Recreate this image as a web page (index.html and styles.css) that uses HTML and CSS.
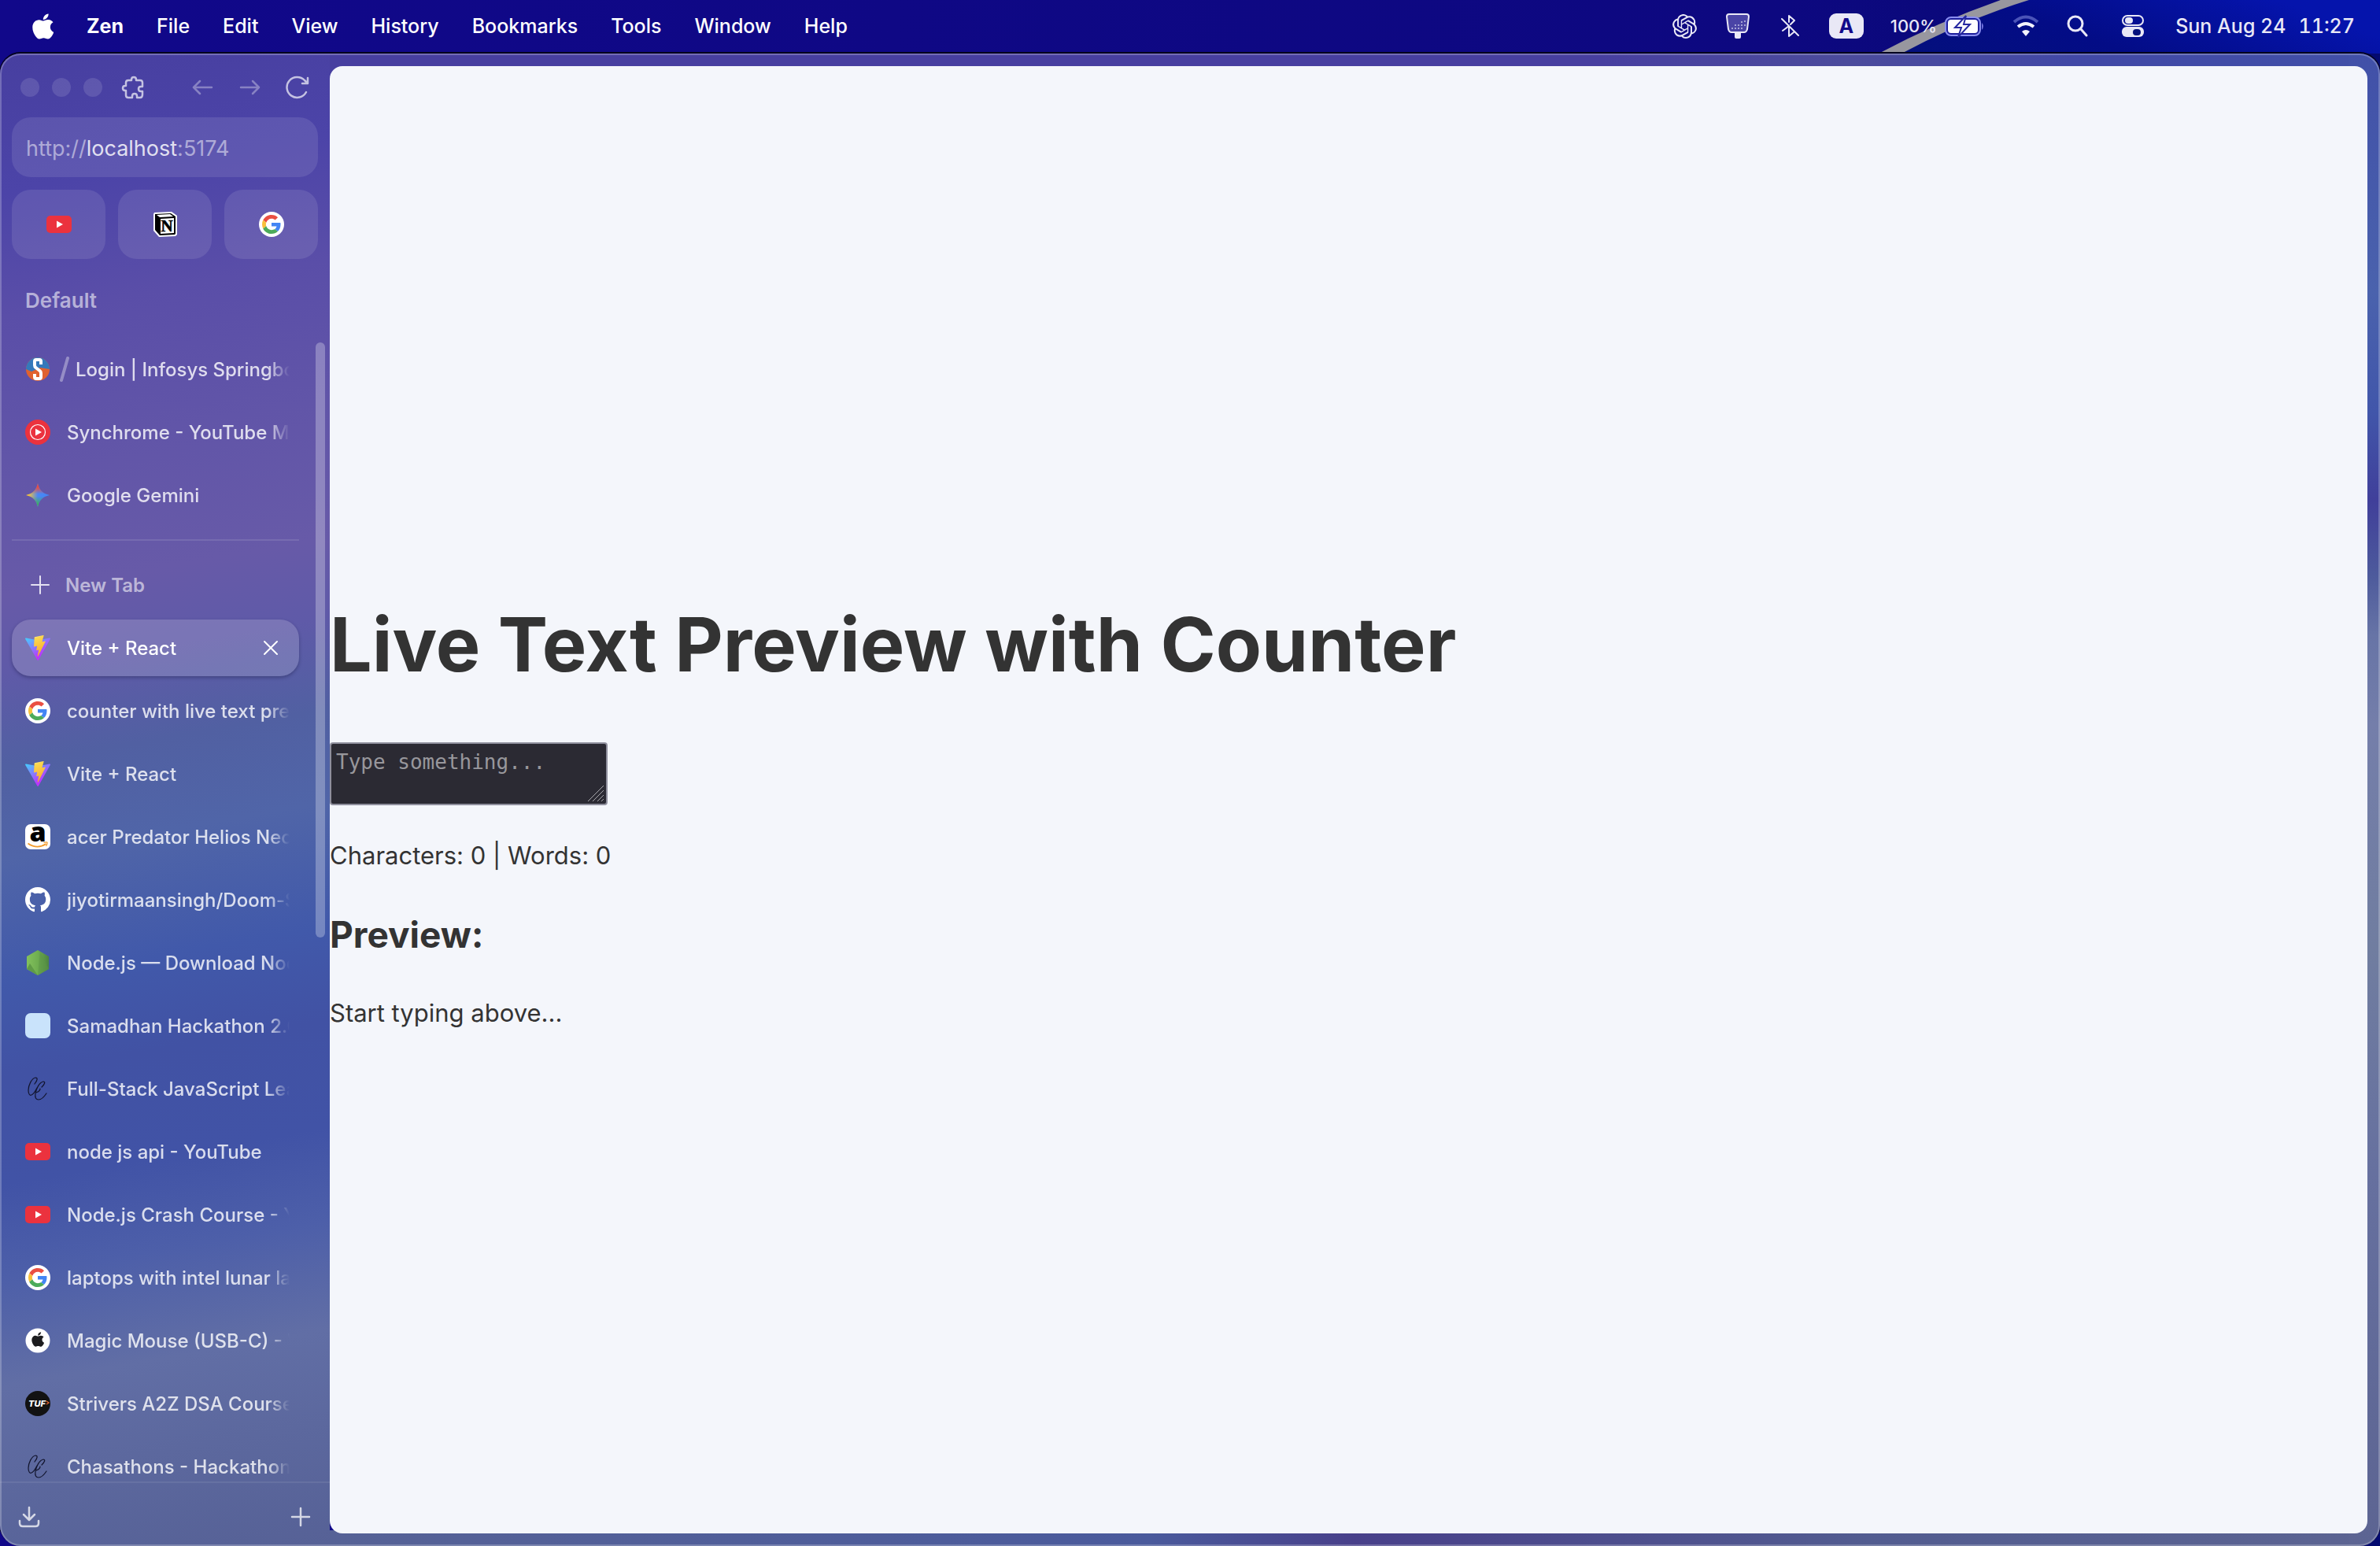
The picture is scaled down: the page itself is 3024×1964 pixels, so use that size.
FILE: index.html
```html
<!DOCTYPE html>
<html lang="en">
<head>
<meta charset="utf-8">
<title>Vite + React</title>
<link rel="stylesheet" href="styles.css">
</head>
<body>
<svg class="sprite" aria-hidden="true">
  <defs>
    <linearGradient id="vite-a" x1="0" y1="0" x2="0.6" y2="0.8"><stop offset="0" stop-color="#41d1ff"/><stop offset="1" stop-color="#bd34fe"/></linearGradient>
    <linearGradient id="vite-b" x1="0.4" y1="0" x2="0.6" y2="1"><stop offset="0" stop-color="#ffea83"/><stop offset="0.1" stop-color="#fbd84f"/><stop offset="1" stop-color="#f7a42a"/></linearGradient>
    <linearGradient id="gem-a" x1="0" y1="0" x2="1" y2="0"><stop offset="0.1" stop-color="#f5c33b"/><stop offset="0.5" stop-color="#4b86f5"/><stop offset="1" stop-color="#4285f4"/></linearGradient>
    <linearGradient id="gem-r" x1="0" y1="0" x2="0" y2="1"><stop offset="0" stop-color="#ec4a3c"/><stop offset="0.15" stop-color="#ec4a3c"/><stop offset="0.45" stop-color="#ec4a3c" stop-opacity="0"/></linearGradient>
    <linearGradient id="gem-g" x1="0" y1="1" x2="0" y2="0"><stop offset="0.1" stop-color="#3fae58"/><stop offset="0.45" stop-color="#3fae58" stop-opacity="0"/></linearGradient>
    <linearGradient id="node-a" x1="0" y1="0" x2="1" y2="0"><stop offset="0" stop-color="#83c15c"/><stop offset="0.5" stop-color="#6fae50"/><stop offset="1" stop-color="#4c8341"/></linearGradient>
  </defs>
  <symbol id="apple" viewBox="0 28 376 456"><path d="M318.7 268.7c-.2-36.7 16.4-64.4 50-84.8-18.8-26.9-47.2-41.7-84.7-44.6-35.5-2.8-74.3 20.7-88.5 20.7-15 0-49.4-19.7-76.4-19.7C63.3 141.2 4 184.8 4 273.5q0 39.3 14.4 81.2c12.8 36.7 59 126.7 107.2 125.2 25.2-.6 43-17.9 75.8-17.9 31.8 0 48.3 17.9 76.4 17.9 48.6-.7 90.4-82.5 102.6-119.3-65.2-30.7-61.7-90-61.7-91.9zm-56.6-164.2c27.3-32.4 24.8-61.9 24-72.5-24.1 1.4-52 16.4-67.9 34.9-17.5 19.8-27.8 44.3-25.6 71.9 26.1 2 49.9-11.4 69.5-34.3z"/></symbol>
  <symbol id="youtube" viewBox="0 0 32 32"><rect y="5" width="32" height="22" rx="5" fill="#eb323e"/><path d="M13 11.5v9l8-4.500z" fill="#fff"/></symbol>
  <symbol id="google" viewBox="0 0 32 32"><circle cx="16" cy="16" r="16" fill="#fff"/><g transform="translate(4 4) scale(.5)"><path fill="#ea4f42" d="M24 9.500c3.540 0 6.710 1.220 9.210 3.600l6.850-6.850C35.900 2.380 30.470 0 24 0 14.620 0 6.510 5.380 2.560 13.220l7.980 6.190C12.430 13.720 17.740 9.500 24 9.500z"/><path fill="#4285f4" d="M46.980 24.550c0-1.570-.15-3.090-.38-4.550H24v9.020h12.940c-.58 2.960-2.260 5.480-4.780 7.180l7.730 6c4.510-4.180 7.090-10.360 7.090-17.650z"/><path fill="#f9c03a" d="M10.530 28.590c-.48-1.450-.76-2.990-.76-4.590s.27-3.140.76-4.590l-7.980-6.190C.92 16.460 0 20.120 0 24c0 3.880.92 7.540 2.560 10.780l7.970-6.190z"/><path fill="#4cab5a" d="M24 48c6.480 0 11.930-2.130 15.890-5.810l-7.730-6c-2.150 1.450-4.920 2.300-8.160 2.300-6.260 0-11.570-4.220-13.470-9.910l-7.980 6.190C6.510 42.620 14.620 48 24 48z"/></g></symbol>
  <symbol id="springboard" viewBox="0 0 32 32"><circle cx="16" cy="16" r="15" fill="#e0622f"/><path d="M1 16a15 15 0 0 1 30 0l-12-2-11 5z" fill="#3479bb"/><path d="M20 10V6q0-2-2-2h-4q-2 0-2 2v5q0 2 1.500 3l5 4q1.500 1 1.500 3v5q0 2-2 2h-4q-2 0-2-2v-4" fill="none" stroke="#fff" stroke-width="4"/></symbol>
  <symbol id="ytmusic" viewBox="0 0 32 32"><circle cx="16" cy="16" r="16" fill="#eb323e"/><circle cx="16" cy="16" r="9.500" fill="none" stroke="#fff" stroke-width="1.200"/><path d="M13 11.500v9l8-4.500z" fill="#fff"/></symbol>
  <symbol id="gemini" viewBox="0 0 32 32"><path d="M16 1c1.500 8 6 13 15 15-9 2-13.500 7-15 15-1.500-8-6-13-15-15 9-2 13.500-7 15-15z" fill="url(#gem-a)"/><path d="M16 1c1.500 8 6 13 15 15-9 2-13.500 7-15 15-1.500-8-6-13-15-15 9-2 13.500-7 15-15z" fill="url(#gem-r)"/><path d="M16 1c1.500 8 6 13 15 15-9 2-13.500 7-15 15-1.500-8-6-13-15-15 9-2 13.500-7 15-15z" fill="url(#gem-g)"/></symbol>
  <symbol id="vite" viewBox="0 0 256 257"><path fill="url(#vite-a)" d="M255.153 37.938L134.897 252.976c-2.483 4.440-8.862 4.466-11.382.048L.875 37.958c-2.746-4.814 1.371-10.646 6.827-9.670l120.385 21.517a6.537 6.537 0 0 0 2.322-.004l117.867-21.483c5.438-.991 9.574 4.796 6.877 9.620Z"/><path fill="url(#vite-b)" d="M185.432.063L96.440 17.501a3.268 3.268 0 0 0-2.634 3.014l-5.474 92.456a3.268 3.268 0 0 0 3.997 3.378l24.777-5.718c2.318-.535 4.413 1.507 3.936 3.838l-7.361 36.047c-.495 2.426 1.782 4.500 4.151 3.780l15.304-4.649c2.372-.72 4.652 1.360 4.150 3.788l-11.698 56.621c-.732 3.542 3.979 5.473 5.943 2.437l1.313-2.028l72.516-144.720c1.215-2.423-.88-5.186-3.540-4.672l-25.505 4.922c-2.396.462-4.435-1.770-3.759-4.114l16.646-57.705c.677-2.350-1.370-4.583-3.769-4.113Z"/></symbol>
  <symbol id="github" viewBox="0 0 16 16"><path fill="#fff" d="M8 0C3.580 0 0 3.580 0 8c0 3.540 2.290 6.530 5.470 7.590.4.070.55-.17.55-.38 0-.19-.01-.82-.01-1.490-2.010.37-2.530-.49-2.690-.94-.09-.23-.48-.94-.82-1.130-.28-.15-.68-.52-.01-.53.63-.01 1.080.58 1.230.82.72 1.210 1.870.87 2.330.66.070-.52.28-.87.51-1.070-1.780-.2-3.640-.89-3.640-3.950 0-.87.31-1.590.82-2.150-.08-.2-.36-1.020.08-2.120 0 0 .67-.21 2.200.82.64-.18 1.320-.27 2-.27s1.360.09 2 .27c1.530-1.040 2.200-.82 2.200-.82.44 1.100.16 1.920.08 2.120.51.56.82 1.270.82 2.150 0 3.070-1.870 3.750-3.650 3.950.29.25.54.73.54 1.480 0 1.070-.01 1.930-.01 2.200 0 .21.15.46.55.38A8.010 8.010 0 0 0 16 8c0-4.420-3.580-8-8-8z"/></symbol>
  <symbol id="node" viewBox="0 0 32 32"><path d="M16 0l14 8v16l-14 8-14-8V8z" fill="url(#node-a)"/><path d="M2 24l4-7 10 15z" fill="#5f9a47"/><path d="M19 2l11 22-14 8z" fill="#5b9546" opacity=".5"/></symbol>
  <symbol id="samadhan" viewBox="0 0 32 32"><rect width="32" height="32" rx="7" fill="#c9e3fb"/></symbol>
  <symbol id="chai" viewBox="0 0 32 32"><path d="M12 10c4-5 4-8 1-8C8 3 4 12 4 18c0 5 2 7 4 6 3-1 5-5 7-9M21 14c4-4 5-7 2-7-5 1-9 9-10 15-1 6 1 8 4 8 4 0 8-5 10-8M14 21c3-1 5-3 5-5" fill="none" stroke="#11142c" stroke-width="1.200" stroke-linecap="round"/></symbol>
  <symbol id="applecircle" viewBox="0 0 32 32"><circle cx="16" cy="16" r="15.500" fill="#fff"/><use href="#apple" x="8" y="5" width="16" height="19" fill="#1c1c1e"/></symbol>
</svg>

<header class="menubar">
  <svg class="wallpaper-streak" viewBox="0 0 680 68" aria-hidden="true">
    <defs><linearGradient id="sky" x1="0" y1="1" x2="1" y2="0.700"><stop offset="0" stop-color="#04107c"/><stop offset="0.45" stop-color="#030c86"/><stop offset="1" stop-color="#0514ac"/></linearGradient></defs>
    <path d="M57 68Q140 25 215 0H680V68z" fill="url(#sky)"/>
    <path d="M43 68Q118 28 198 0h36Q150 26 72 68z" fill="#98979f"/>
  </svg>
  <nav class="menus" aria-label="Application menu">
    <button class="apple-menu" aria-label="Apple"><svg class="apple-icon"><use href="#apple"/></svg></button>
    <button class="app-name">Zen</button>
    <button>File</button>
    <button>Edit</button>
    <button>View</button>
    <button>History</button>
    <button>Bookmarks</button>
    <button>Tools</button>
    <button>Window</button>
    <button>Help</button>
  </nav>
  <div class="status">
    <svg class="st-gpt" viewBox="0 0 24 24" fill="currentColor"><path d="M22.282 9.821a5.985 5.985 0 0 0-.516-4.911 6.046 6.046 0 0 0-6.510-2.900A6.065 6.065 0 0 0 4.981 4.182a5.985 5.985 0 0 0-3.998 2.900 6.046 6.046 0 0 0 .743 7.097 5.980 5.980 0 0 0 .511 4.911 6.051 6.051 0 0 0 6.515 2.900A5.985 5.985 0 0 0 13.260 24a6.056 6.056 0 0 0 5.772-4.206 5.989 5.989 0 0 0 3.998-2.900 6.056 6.056 0 0 0-.748-7.073zm-9.022 12.608a4.476 4.476 0 0 1-2.876-1.041l.142-.08 4.778-2.758a.795.795 0 0 0 .393-.681v-6.737l2.020 1.169a.071.071 0 0 1 .038.052v5.583a4.504 4.504 0 0 1-4.495 4.494zm-9.661-4.125a4.471 4.471 0 0 1-.535-3.014l.142.085 4.783 2.758a.771.771 0 0 0 .781 0l5.843-3.369v2.332a.08.08 0 0 1-.033.062L9.740 19.950a4.499 4.499 0 0 1-6.141-1.646zM2.341 7.896a4.485 4.485 0 0 1 2.366-1.973V11.600a.766.766 0 0 0 .388.677l5.814 3.354-2.020 1.169a.076.076 0 0 1-.071 0l-4.830-2.787A4.504 4.504 0 0 1 2.341 7.872zm16.596 3.856L13.104 8.364 15.119 7.200a.076.076 0 0 1 .071 0l4.830 2.791a4.494 4.494 0 0 1-.677 8.104v-5.677a.79.79 0 0 0-.407-.667zm2.011-3.023l-.142-.085-4.774-2.782a.776.776 0 0 0-.785 0L9.409 9.230V6.897a.066.066 0 0 1 .028-.062l4.830-2.787a4.499 4.499 0 0 1 6.680 4.660zM8.307 12.863l-2.020-1.164a.08.08 0 0 1-.038-.057V6.074a4.499 4.499 0 0 1 7.376-3.454l-.142.081L8.704 5.459a.795.795 0 0 0-.393.681zm1.098-2.365l2.602-1.500 2.607 1.500v2.999l-2.597 1.500-2.607-1.500Z"/></svg>
    <svg class="st-plug" viewBox="0 0 30 32"><path d="M4 1h22q3 0 3 3l-2 16q-1 4-4 4H7q-3 0-4-4L1 4q0-3 3-3z" fill="#4a44a6" stroke="#e9e8f6" stroke-width="2"/><path d="M11 24h8v6q0 2-2 2h-4q-2 0-2-2z" fill="#e9e8f6"/><path d="M7 19h2M11 19h2M15 19h2M19 19h2M11 15h2M15 15h2M19 15h2M19 11h2M23 10h2M23 15h2" stroke="#a5a3d6" stroke-width="2"/></svg>
    <svg class="st-bt" viewBox="0 0 24 30" fill="none" stroke="currentColor" stroke-width="2" stroke-linecap="round" stroke-linejoin="round"><path d="M2 6l21 21M11 10V2l7 6-5 5M3 21l8-6v13l6-5"/></svg>
    <span class="input-source">A</span>
    <span class="battery"><span class="percent">100%</span>
      <svg class="st-battery" viewBox="0 0 52 34"><rect x="1" y="6" width="44" height="23" rx="7" fill="#1c1e9c" stroke="#8a8ef0" stroke-width="2"/><rect x="4" y="9" width="38" height="17" rx="4" fill="#fdfdff"/><path d="M47 13q4 4 0 9z" fill="#7678e0"/><path d="M27 4L13 19h8l-4 12 15-16h-8z" fill="#fff" stroke="#2527a0" stroke-width="2"/></svg></span>
    <svg class="st-wifi" viewBox="0 0 34 28" fill="none" stroke="#f3f3fc" stroke-width="4"><path d="M2 9q15-13 30 0" stroke="#4b54b8"/><path d="M7 15q10-8 20 0"/><path d="M17 27l-5-6q5-4 10 0z" fill="#f3f3fc" stroke="none"/></svg>
    <svg class="st-search" viewBox="0 0 28 28" fill="none" stroke="currentColor" stroke-width="3" stroke-linecap="round"><circle cx="11" cy="11" r="9"/><path d="M18 18l7 8"/></svg>
    <svg class="st-control" viewBox="0 0 28 28"><rect x="1" y="1" width="26" height="12" rx="6" fill="none" stroke="#e9e8f6" stroke-width="2"/><rect x="4" y="3" width="10" height="8" rx="4" fill="#e9e8f6"/><rect y="15" width="28" height="13" rx="6" fill="#e9e8f6"/><rect x="14" y="18" width="10" height="8" rx="4" fill="#04107c"/></svg>
    <time class="clock"><span>Sun Aug 24</span><span>11:27</span></time>
  </div>
</header>

<div class="window">
  <aside class="sidebar">
    <div class="toolbar">
      <span class="lights"><i></i><i></i><i></i></span>
      <button class="ext" aria-label="Extensions"><svg width="30" height="30" viewBox="0 0 30 30" fill="none" stroke="currentColor" stroke-width="2.500" stroke-linejoin="round"><path d="M6 9q0-3 3-3h4V5q0-3 3-3t3 3v1h5q3 0 3 3v5h-2q-3 0-3 3t3 3h2v4q0 4-3 4h-4v-2q0-3-3-3t-3 3v2H9q-3 0-3-3v-6H5q-3 0-3-3t3-3h1z"/></svg></button>
      <span class="nav">
        <button class="dim" aria-label="Back"><svg width="28" height="22" viewBox="0 0 28 22" fill="none" stroke="currentColor" stroke-width="2.500" stroke-linecap="round" stroke-linejoin="round"><path d="M11 3l-8 8 8 8M3 11h23"/></svg></button>
        <button class="dim" aria-label="Forward"><svg width="28" height="22" viewBox="0 0 28 22" fill="none" stroke="currentColor" stroke-width="2.500" stroke-linecap="round" stroke-linejoin="round"><path d="M18 3l8 8-8 8M26 11H3"/></svg></button>
        <button aria-label="Reload"><svg width="30" height="30" viewBox="0 0 30 30" fill="none" stroke="currentColor" stroke-width="2.500" stroke-linecap="round" stroke-linejoin="round"><path d="M26 21A13 13 0 1 1 24 6l3 3M28 3v7h-7"/></svg></button>
      </span>
    </div>
    <button class="url">http://<b>localhost</b>:5174</button>
    <div class="essentials">
      <button aria-label="YouTube"><svg class="fav"><use href="#youtube"/></svg></button>
      <button aria-label="Notion"><svg class="fav" viewBox="0 0 32 32"><path d="M2 1 24 0l7 5v24l-2 2-21 1-7-8V3z" fill="#fff"/><path d="M3 3l20-1 6 4v22l-1 1-19 1-6-7z" fill="#000"/><path d="M5 4l17-1 4 3-17 1z" fill="#fff"/><path d="M10 9l17-1v19l-17 1z" fill="#fff"/><text x="18" y="25" text-anchor="middle" font-family="Liberation Serif, serif" font-weight="700" font-size="21" stroke="#000" stroke-width=".6">N</text></svg></button>
      <button aria-label="Google"><svg class="fav"><use href="#google"/></svg></button>
    </div>
    <h2 class="space">Default</h2>
    <div class="tabs">
      <ul>
        <li><a class="tab pinned" href="#"><svg class="fav"><use href="#springboard"/></svg><svg class="slash" viewBox="0 0 12 32"><path d="M10 2L2 30" stroke="currentColor" stroke-width="4" stroke-linecap="round"/></svg><span class="label">Login | Infosys Springboard</span></a></li>
        <li><a class="tab" href="#"><svg class="fav"><use href="#ytmusic"/></svg><span class="label">Synchrome - YouTube Music</span></a></li>
        <li><a class="tab" href="#"><svg class="fav"><use href="#gemini"/></svg><span class="label">Google Gemini</span></a></li>
      </ul>
      <hr>
      <button class="new-tab"><svg width="26" height="26" viewBox="0 0 26 26" stroke="currentColor" stroke-width="2" stroke-linecap="round"><path d="M13 2v22M2 13h22"/></svg>New Tab</button>
      <ul>
        <li><div class="tab active"><svg class="fav"><use href="#vite"/></svg><span class="label">Vite + React</span><button class="close" aria-label="Close tab"><svg width="20" height="20" viewBox="0 0 20 20" stroke="currentColor" stroke-width="2" stroke-linecap="round"><path d="M2 2l16 16M18 2L2 18"/></svg></button></div></li>
        <li><a class="tab" href="#"><svg class="fav"><use href="#google"/></svg><span class="label">counter with live text preview</span></a></li>
        <li><a class="tab" href="#"><svg class="fav"><use href="#vite"/></svg><span class="label">Vite + React</span></a></li>
        <li><a class="tab" href="#"><svg class="fav" viewBox="0 0 32 32"><rect width="32" height="32" rx="7" fill="#fff"/><text x="16" y="22" text-anchor="middle" font-family="Open Sans, sans-serif" font-weight="800" font-size="34">a</text><path d="M3.500 24.500q12 8 23 .5" fill="none" stroke="#f39b2b" stroke-width="1.800"/><path d="M23.500 23.500q5-1.500 4.500.5 0 2-1.500 4" fill="none" stroke="#f39b2b" stroke-width="1.200"/></svg><span class="label">acer Predator Helios Neo</span></a></li>
        <li><a class="tab" href="#"><svg class="fav"><use href="#github"/></svg><span class="label">jiyotirmaansingh/Doom-S</span></a></li>
        <li><a class="tab" href="#"><svg class="fav"><use href="#node"/></svg><span class="label">Node.js — Download Node.js</span></a></li>
        <li><a class="tab" href="#"><svg class="fav"><use href="#samadhan"/></svg><span class="label">Samadhan Hackathon 2.0</span></a></li>
        <li><a class="tab" href="#"><svg class="fav"><use href="#chai"/></svg><span class="label">Full-Stack JavaScript Learn</span></a></li>
        <li><a class="tab" href="#"><svg class="fav"><use href="#youtube"/></svg><span class="label">node js api - YouTube</span></a></li>
        <li><a class="tab" href="#"><svg class="fav"><use href="#youtube"/></svg><span class="label">Node.js Crash Course - YouTube</span></a></li>
        <li><a class="tab" href="#"><svg class="fav"><use href="#google"/></svg><span class="label">laptops with intel lunar lake</span></a></li>
        <li><a class="tab" href="#"><svg class="fav"><use href="#applecircle"/></svg><span class="label">Magic Mouse (USB-C) - White</span></a></li>
        <li><a class="tab" href="#"><svg class="fav" viewBox="0 0 32 32"><circle cx="16" cy="16" r="16" fill="#121212"/><text x="15" y="20" text-anchor="middle" font-family="Inter, sans-serif" font-weight="800" font-style="italic" font-size="11" fill="#fff">TUF</text><path d="M27 13l3 2-3 2" fill="none" stroke="#e2612c" stroke-width="1.300"/></svg><span class="label">Strivers A2Z DSA Course</span></a></li>
        <li><a class="tab" href="#"><svg class="fav"><use href="#chai"/></svg><span class="label">Chasathons - Hackathon</span></a></li>
      </ul>
      <span class="scroll-thumb"></span>
    </div>
    <footer class="tools">
      <button aria-label="Downloads"><svg width="28" height="28" viewBox="0 0 28 28" fill="none" stroke="currentColor" stroke-width="2.500" stroke-linecap="round" stroke-linejoin="round"><path d="M14 2v15M7 11l7 7 7-7M2 19v3q0 4 4 4h16q4 0 4-4v-3"/></svg></button>
      <button aria-label="Create new"><svg width="26" height="26" viewBox="0 0 26 26" stroke="currentColor" stroke-width="2.500" stroke-linecap="round"><path d="M13 2v22M2 13h22"/></svg></button>
    </footer>
  </aside>

  <main class="page">
    <h1>Live Text Preview with Counter</h1>
    <div class="field">
      <textarea aria-label="Text" placeholder="Type something..."></textarea>
      <svg class="grip" width="22" height="22" viewBox="0 0 22 22" stroke="#a9a8ad" stroke-width="1" aria-hidden="true"><path d="M1 21L21 1M7 21L21 7M13 21l8-8M18 21l3-3"/></svg>
    </div>
    <p>Characters: 0 | Words: 0</p>
    <h2>Preview:</h2>
    <p>Start typing above...</p>
  </main>
</div>
</body>
</html>
```
FILE: styles.css
```css
* { box-sizing: border-box; }

body {
  margin: 0;
  height: 100vh;
  display: grid;
  grid-template-rows: 68px minmax(0, 1fr);
  background: #10088a linear-gradient(90deg, #11088a, #0d0880 75%, #040a70) no-repeat;
  color: #fff;
  font-family: Inter, "Liberation Sans", sans-serif;
  font-size: 25px;
  overflow: hidden;
}

button {
  padding: 0;
  border: 0;
  background: none;
  color: inherit;
  font: inherit;
}

svg { display: block; flex: none; }
ul { margin: 0; padding: 0; list-style: none; }
.sprite { position: absolute; width: 0; height: 0; }

/* menu bar */
.menubar {
  position: relative;
  display: flex;
  justify-content: space-between;
  padding: 0 32px 2px 41px;
}
.wallpaper-streak { position: absolute; top: 0; right: 0; width: 680px; height: 68px; }
.menus, .status { position: relative; display: flex; align-items: center; }
.menus { gap: 42px; font-weight: 500; }
.apple-icon { width: 27px; height: 33px; fill: #fff; }
.app-name { font-weight: 700; }
.status { color: #e9e8f6; font-weight: 500; }
.st-gpt { width: 31px; height: 31px; margin-right: 37px; }
.st-plug { width: 30px; height: 32px; margin-right: 39px; }
.st-bt { width: 24px; height: 30px; margin-right: 38px; }
.input-source {
  width: 44px;
  height: 32px;
  margin-right: 34px;
  border-radius: 9px;
  background: #e9e8f6;
  color: #12098a;
  font-weight: 700;
  line-height: 32px;
  text-align: center;
}
.battery { display: flex; align-items: center; gap: 10px; margin-right: 34px; }
.percent { font-size: 22px; }
.st-battery { width: 52px; height: 34px; }
.st-wifi { width: 34px; height: 28px; margin-right: 35px; }
.st-search { width: 28px; height: 28px; margin-right: 42px; }
.st-control { width: 28px; height: 28px; margin-right: 40px; }
.clock { display: flex; gap: 16px; font-variant-numeric: tabular-nums; }

/* browser window */
.window {
  position: relative;
  display: grid;
  grid-template-columns: 419px minmax(0, 1fr);
  border-radius: 26px;
  background:
    linear-gradient(170deg, #473fa0, #4c44a8 9%, #5a4ea8 17%, #6155a8 26%, #675aa8 35%, #5f5aa8 40%, #5160a2 46%, #5065a8 52%, #4159aa 60%, #4152a4 66%, #4153a6 73%, #4d5fa9 79%, #616ea5 86%, #5c689e 92%, #566196) left / 419px 100% no-repeat,
    linear-gradient(180deg, #4150a8, #4a62ad 16%, #4156aa 24%, #403f9a 30%, #4d5a9c 35%, #6774a6 39%, #747eaa 45%, #707da0 60%, #66709f 75%, #5c6492) right / 40px 100% no-repeat,
    linear-gradient(90deg, #566296, #4a5a9c 40%, #48408a 50%, #525c90 75%, #5c6492) bottom right / calc(100% - 419px) 20px no-repeat,
    linear-gradient(90deg, #473fa0, #473fa0 62%, #4b4b9c 74%, #4148a6 85%, #4150a8) top right / calc(100% - 419px) 30px no-repeat;
  box-shadow: 0 -1px 0 1px #05041f;
}
.window::after {
  content: "";
  position: absolute;
  inset: 0;
  border: 2px solid rgb(255 255 255 / 24%);
  border-radius: 26px;
  pointer-events: none;
}

.sidebar { display: flex; flex-direction: column; min-height: 0; color: rgb(255 255 255 / 80%); }
.toolbar {
  display: flex;
  align-items: center;
  height: 81px;
  padding: 5px 26px 0 26px;
  color: rgb(255 255 255 / 68%);
}
.lights { display: flex; gap: 16px; margin-right: 24px; }
.lights i { width: 24px; height: 24px; border-radius: 50%; background: rgb(255 255 255 / 12%); }
.nav { display: flex; align-items: center; gap: 32px; margin-left: auto; }
.dim { opacity: .5; }
.url {
  height: 76px;
  margin: 0 15px 16px;
  padding: 2px 18px 0;
  border-radius: 24px;
  background: rgb(255 255 255 / 10%);
  color: rgb(255 255 255 / 50%);
  font-size: 27px;
  text-align: left;
}
.url b { color: rgb(255 255 255 / 84%); font-weight: 400; }
.essentials { display: grid; grid-template-columns: repeat(3, 1fr); gap: 16px; margin: 0 15px; }
.essentials button {
  display: grid;
  place-items: center;
  height: 88px;
  border-radius: 24px;
  background: rgb(255 255 255 / 10%);
}
.fav { width: 32px; height: 32px; }
.space {
  height: 100px;
  margin: 0;
  padding: 6px 32px 0;
  color: rgb(255 255 255 / 58%);
  font-size: 26px;
  font-weight: 600;
  line-height: 94px;
}
.tabs { position: relative; flex: 1; min-height: 0; padding: 0 39px 0 15px; overflow: hidden; }
.tabs li { padding: 4px 0; }
.tab {
  display: flex;
  align-items: center;
  height: 72px;
  padding: 0 12px 0 17px;
  border-radius: 24px;
  color: inherit;
  font-size: 24px;
  font-weight: 450;
  text-decoration: none;
}
.label {
  flex: 1;
  min-width: 0;
  margin-left: 21px;
  padding-top: 2px;
  overflow: hidden;
  line-height: 40px;
  white-space: nowrap;
  -webkit-mask-image: linear-gradient(90deg, #000 calc(100% - 28px), transparent);
  mask-image: linear-gradient(90deg, #000 calc(100% - 28px), transparent);
}
.slash { width: 12px; height: 32px; margin-left: 12px; color: rgb(255 255 255 / 35%); }
.pinned .label { margin-left: 8px; }
.active {
  padding-right: 26px;
  background: rgb(255 255 255 / 17%);
  box-shadow: 0 2px 4px rgb(20 20 60 / 35%);
  color: #fff;
}
.close { color: #fff; }
hr { height: 2px; margin: 16px 0; border: 0; background: rgb(255 255 255 / 11%); }
.new-tab {
  display: flex;
  align-items: center;
  gap: 19px;
  width: 100%;
  height: 80px;
  padding-left: 23px;
  color: rgb(255 255 255 / 58%);
  font-size: 24px;
  font-weight: 600;
}
.new-tab svg { color: #e4e1f2; }
.scroll-thumb {
  position: absolute;
  top: 6px;
  right: 6px;
  width: 12px;
  height: 52%;
  border-radius: 6px;
  background: rgb(255 255 255 / 28%);
}
.tools {
  display: flex;
  align-items: center;
  justify-content: space-between;
  height: 82px;
  padding: 6px 24px 0 23px;
  border-top: 2px solid rgb(255 255 255 / 8%);
  color: rgb(255 255 255 / 75%);
}

/* loaded page */
.page {
  display: flex;
  flex-direction: column;
  justify-content: center;
  align-items: flex-start;
  margin: 16px 16px 16px 0;
  padding-top: 5px;
  border-radius: 16px;
  background: #f4f6fb;
  color: #333;
  font-size: 31px;
  line-height: 48px;
}
.page h1 { margin: 68px 0; font-size: 95px; font-weight: 700; line-height: 112px; }
.page h2 { margin: 40px 0; font-size: 46px; font-weight: 700; line-height: 72px; }
.page p { margin: 0; }
.page p:last-child { margin-bottom: 32px; }
.field { position: relative; margin-bottom: 40px; }
textarea {
  display: block;
  width: 353px;
  height: 80px;
  padding: 5px 6px;
  border: 2px solid #8f8f9d;
  border-radius: 4px;
  background: #2b2a33;
  color: #fff;
  font: 26px/36px "DejaVu Sans Mono", monospace;
  resize: none;
}
textarea::placeholder { color: #98979c; }
.grip { position: absolute; right: 4px; bottom: 4px; }
```
